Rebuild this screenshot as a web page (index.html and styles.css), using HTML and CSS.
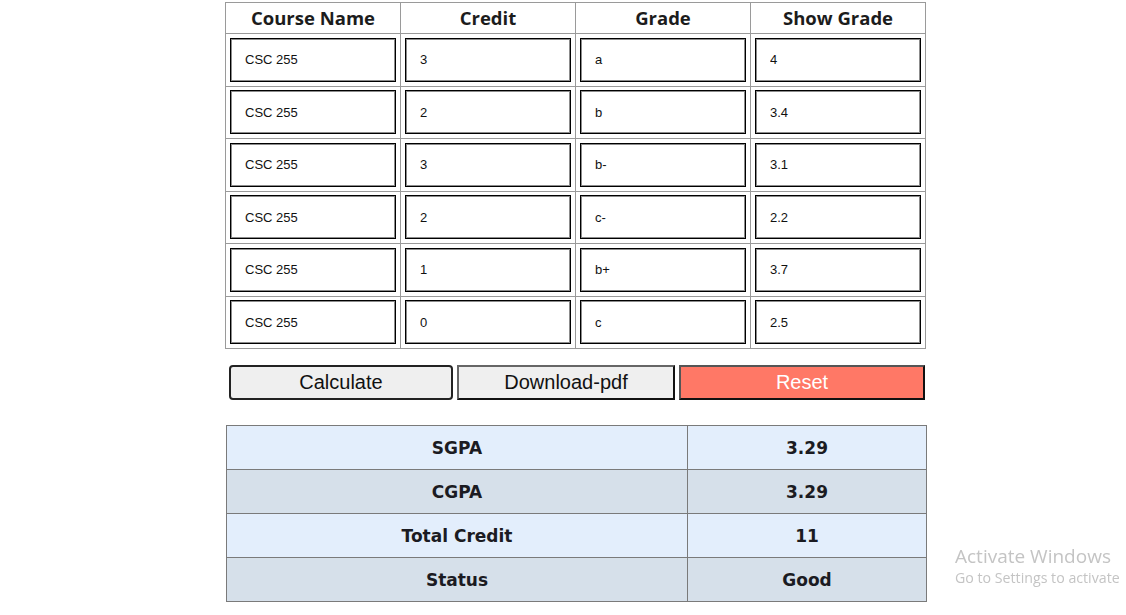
FILE: index.html
```html
<!DOCTYPE html>
<html>
<head>
<meta charset="utf-8">
<link rel="stylesheet" href="styles.css">
</head>
<body>
<div class="page">
  <table class="courses">
    <thead>
      <tr><th>Course Name</th><th>Credit</th><th>Grade</th><th>Show Grade</th></tr>
    </thead>
    <tbody>
      <tr><td><input value="CSC 255"></td><td><input value="3"></td><td><input value="a"></td><td><input value="4"></td></tr>
      <tr><td><input value="CSC 255"></td><td><input value="2"></td><td><input value="b"></td><td><input value="3.4"></td></tr>
      <tr><td><input value="CSC 255"></td><td><input value="3"></td><td><input value="b-"></td><td><input value="3.1"></td></tr>
      <tr><td><input value="CSC 255"></td><td><input value="2"></td><td><input value="c-"></td><td><input value="2.2"></td></tr>
      <tr><td><input value="CSC 255"></td><td><input value="1"></td><td><input value="b+"></td><td><input value="3.7"></td></tr>
      <tr><td><input value="CSC 255"></td><td><input value="0"></td><td><input value="c"></td><td><input value="2.5"></td></tr>
    </tbody>
  </table>

  <div class="actions">
    <button class="btn btn-calc">Calculate</button>
    <button class="btn btn-pdf">Download-pdf</button>
    <button class="btn btn-reset">Reset</button>
  </div>

  <table class="results">
    <tr class="light"><td>SGPA</td><td class="val">3.29</td></tr>
    <tr class="dark"><td>CGPA</td><td class="val">3.29</td></tr>
    <tr class="light"><td>Total Credit</td><td class="val">11</td></tr>
    <tr class="dark"><td>Status</td><td class="val">Good</td></tr>
  </table>
</div>

<div class="watermark">
  <div class="wm-title">Activate Windows</div>
  <div class="wm-sub">Go to Settings to activate</div>
</div>
</body>
</html>
```

FILE: styles.css
```css
html, body {
  margin: 0;
  padding: 0;
  background: #ffffff;
}

body {
  font-family: "Liberation Sans", Arial, sans-serif;
}

.page {
  width: 702px;
  margin-left: 225px;
  padding-top: 2px;
}

.courses {
  border: 1px solid #9a9a9a;
  border-collapse: collapse;
  width: 701px;
  table-layout: fixed;
}

.courses th,
.courses td {
  border: 1px solid #9a9a9a;
}

.courses th {
  font-family: "Open Sans", "Noto Sans", sans-serif;
  font-weight: 700;
  font-size: 18.5px;
  color: #1c1c1c;
  height: 30px;
  padding: 0;
  line-height: 30px;
  text-align: center;
}

.courses td {
  padding: 3px 4px;
  height: 45.5px;
}

.courses input {
  display: block;
  box-sizing: border-box;
  width: 100%;
  height: 44px;
  border: 1px solid #000;
  box-shadow: inset 0 0 0 1px rgba(0, 0, 0, 0.45);
  padding: 0 14px;
  font-family: "Liberation Sans", Arial, sans-serif;
  font-size: 13px;
  color: #111;
  background: #fff;
}

.actions {
  display: flex;
  gap: 4px;
  padding-left: 4px;
  margin-top: 16px;
}

.btn {
  box-sizing: border-box;
  height: 35px;
  font-family: "Liberation Sans", Arial, sans-serif;
  font-size: 20px;
  color: #111;
  background: #efefef;
  padding: 0;
  border: 2px solid;
}

.btn-calc {
  width: 224px;
  border-color: #222;
  border-radius: 4px;
}

.btn-pdf {
  width: 218px;
  border-color: #666 #111 #111 #666;
}

.btn-reset {
  width: 246px;
  background: #ff7866;
  color: #fff;
  border-color: #555 #111 #111 #555;
}

.results {
  margin-top: 25px;
  margin-left: 1px;
  width: 701px;
  border-collapse: collapse;
  border: 1px solid #7a7a7a;
}

.results td {
  border: 1px solid #7a7a7a;
  height: 43px;
  padding: 0;
  text-align: center;
  font-family: "DejaVu Sans", Verdana, sans-serif;
  font-weight: 700;
  font-size: 17px;
  color: #1b1b22;
}

.results td.val {
  width: 238px;
}

.results tr.light td {
  background: #e3eefc;
}

.results tr.dark td {
  background: #d6e0ea;
}

.watermark {
  position: fixed;
  left: 955px;
  top: 544px;
  color: #c4c4c4;
  font-family: "Open Sans", "Noto Sans", sans-serif;
  white-space: nowrap;
}

.wm-title {
  font-size: 19px;
  line-height: 24px;
}

.wm-sub {
  font-size: 14.2px;
  line-height: 20px;
}
```
